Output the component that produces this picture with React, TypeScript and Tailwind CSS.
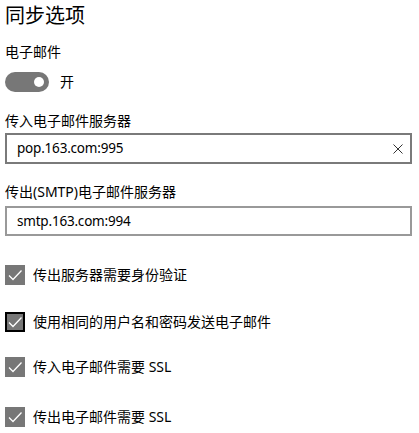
const font = {
  fontFamily: '"Segoe UI", "Noto Sans", "Noto Sans CJK SC", sans-serif',
};

function Check({ focused }: { focused?: boolean }) {
  return (
    <div
      className={
        "w-[20px] h-[20px] bg-[#777777] flex items-center justify-center shrink-0 " +
        (focused ? "border-2 border-black" : "")
      }
    >
      <svg width="16" height="16" viewBox="0 0 16 16" fill="none">
        <path d="M2 8.5 L6 12.5 L14.5 3.5" stroke="white" strokeWidth="1.3" />
      </svg>
    </div>
  );
}

function CheckRow({ label, focused, className }: { label: string; focused?: boolean; className: string }) {
  return (
    <div className={"flex items-center gap-[8px] h-[20px] " + className}>
      <Check focused={focused} />
      <span className="text-[14px] text-black leading-[20px]">{label}</span>
    </div>
  );
}

export default function App() {
  return (
    <div className="w-[419px] h-[433px] bg-white overflow-hidden px-[5px] flex flex-col" style={font}>
      {/* Title */}
      <div className="mt-[2px] h-[28px] text-[20px] leading-[28px] text-black">同步选项</div>

      {/* Email toggle */}
      <div className="mt-[12px] h-[20px] text-[14px] leading-[20px] text-black">电子邮件</div>
      <div className="mt-[10px] flex items-center gap-[11px] h-[20px]">
        <div className="w-[44px] h-[20px] rounded-full bg-[#777777] flex items-center justify-end pr-[5px]">
          <div className="w-[10px] h-[10px] rounded-full bg-white" />
        </div>
        <span className="text-[14px] leading-[20px] text-black">开</span>
      </div>

      {/* Incoming server */}
      <div className="mt-[19px] h-[20px] text-[14px] leading-[20px] text-black">传入电子邮件服务器</div>
      <div className="mt-[2px] h-[31px] w-[407px] border-2 border-[#7a7a7a] flex items-center pl-[10px] pr-[7px]">
        <span className="flex-1 text-[13.5px] tracking-[-0.2px] text-black">pop.163.com:995</span>
        <svg width="10" height="10" viewBox="0 0 10 10">
          <path d="M0.5 0.5 L9.5 9.5 M9.5 0.5 L0.5 9.5" stroke="#333" strokeWidth="1" />
        </svg>
      </div>

      {/* Outgoing server */}
      <div className="mt-[18px] h-[20px] text-[14px] leading-[20px] text-black">传出(SMTP)电子邮件服务器</div>
      <div className="mt-[4px] h-[30px] w-[407px] border-2 border-[#999999] flex items-center pl-[10px]">
        <span className="text-[13.5px] tracking-[-0.2px] text-black">smtp.163.com:994</span>
      </div>

      <CheckRow className="mt-[29px]" label="传出服务器需要身份验证" />
      <CheckRow className="mt-[27px]" label="使用相同的用户名和密码发送电子邮件" focused />
      <CheckRow className="mt-[25px]" label="传入电子邮件需要 SSL" />
      <CheckRow className="mt-[30px]" label="传出电子邮件需要 SSL" />
    </div>
  );
}
